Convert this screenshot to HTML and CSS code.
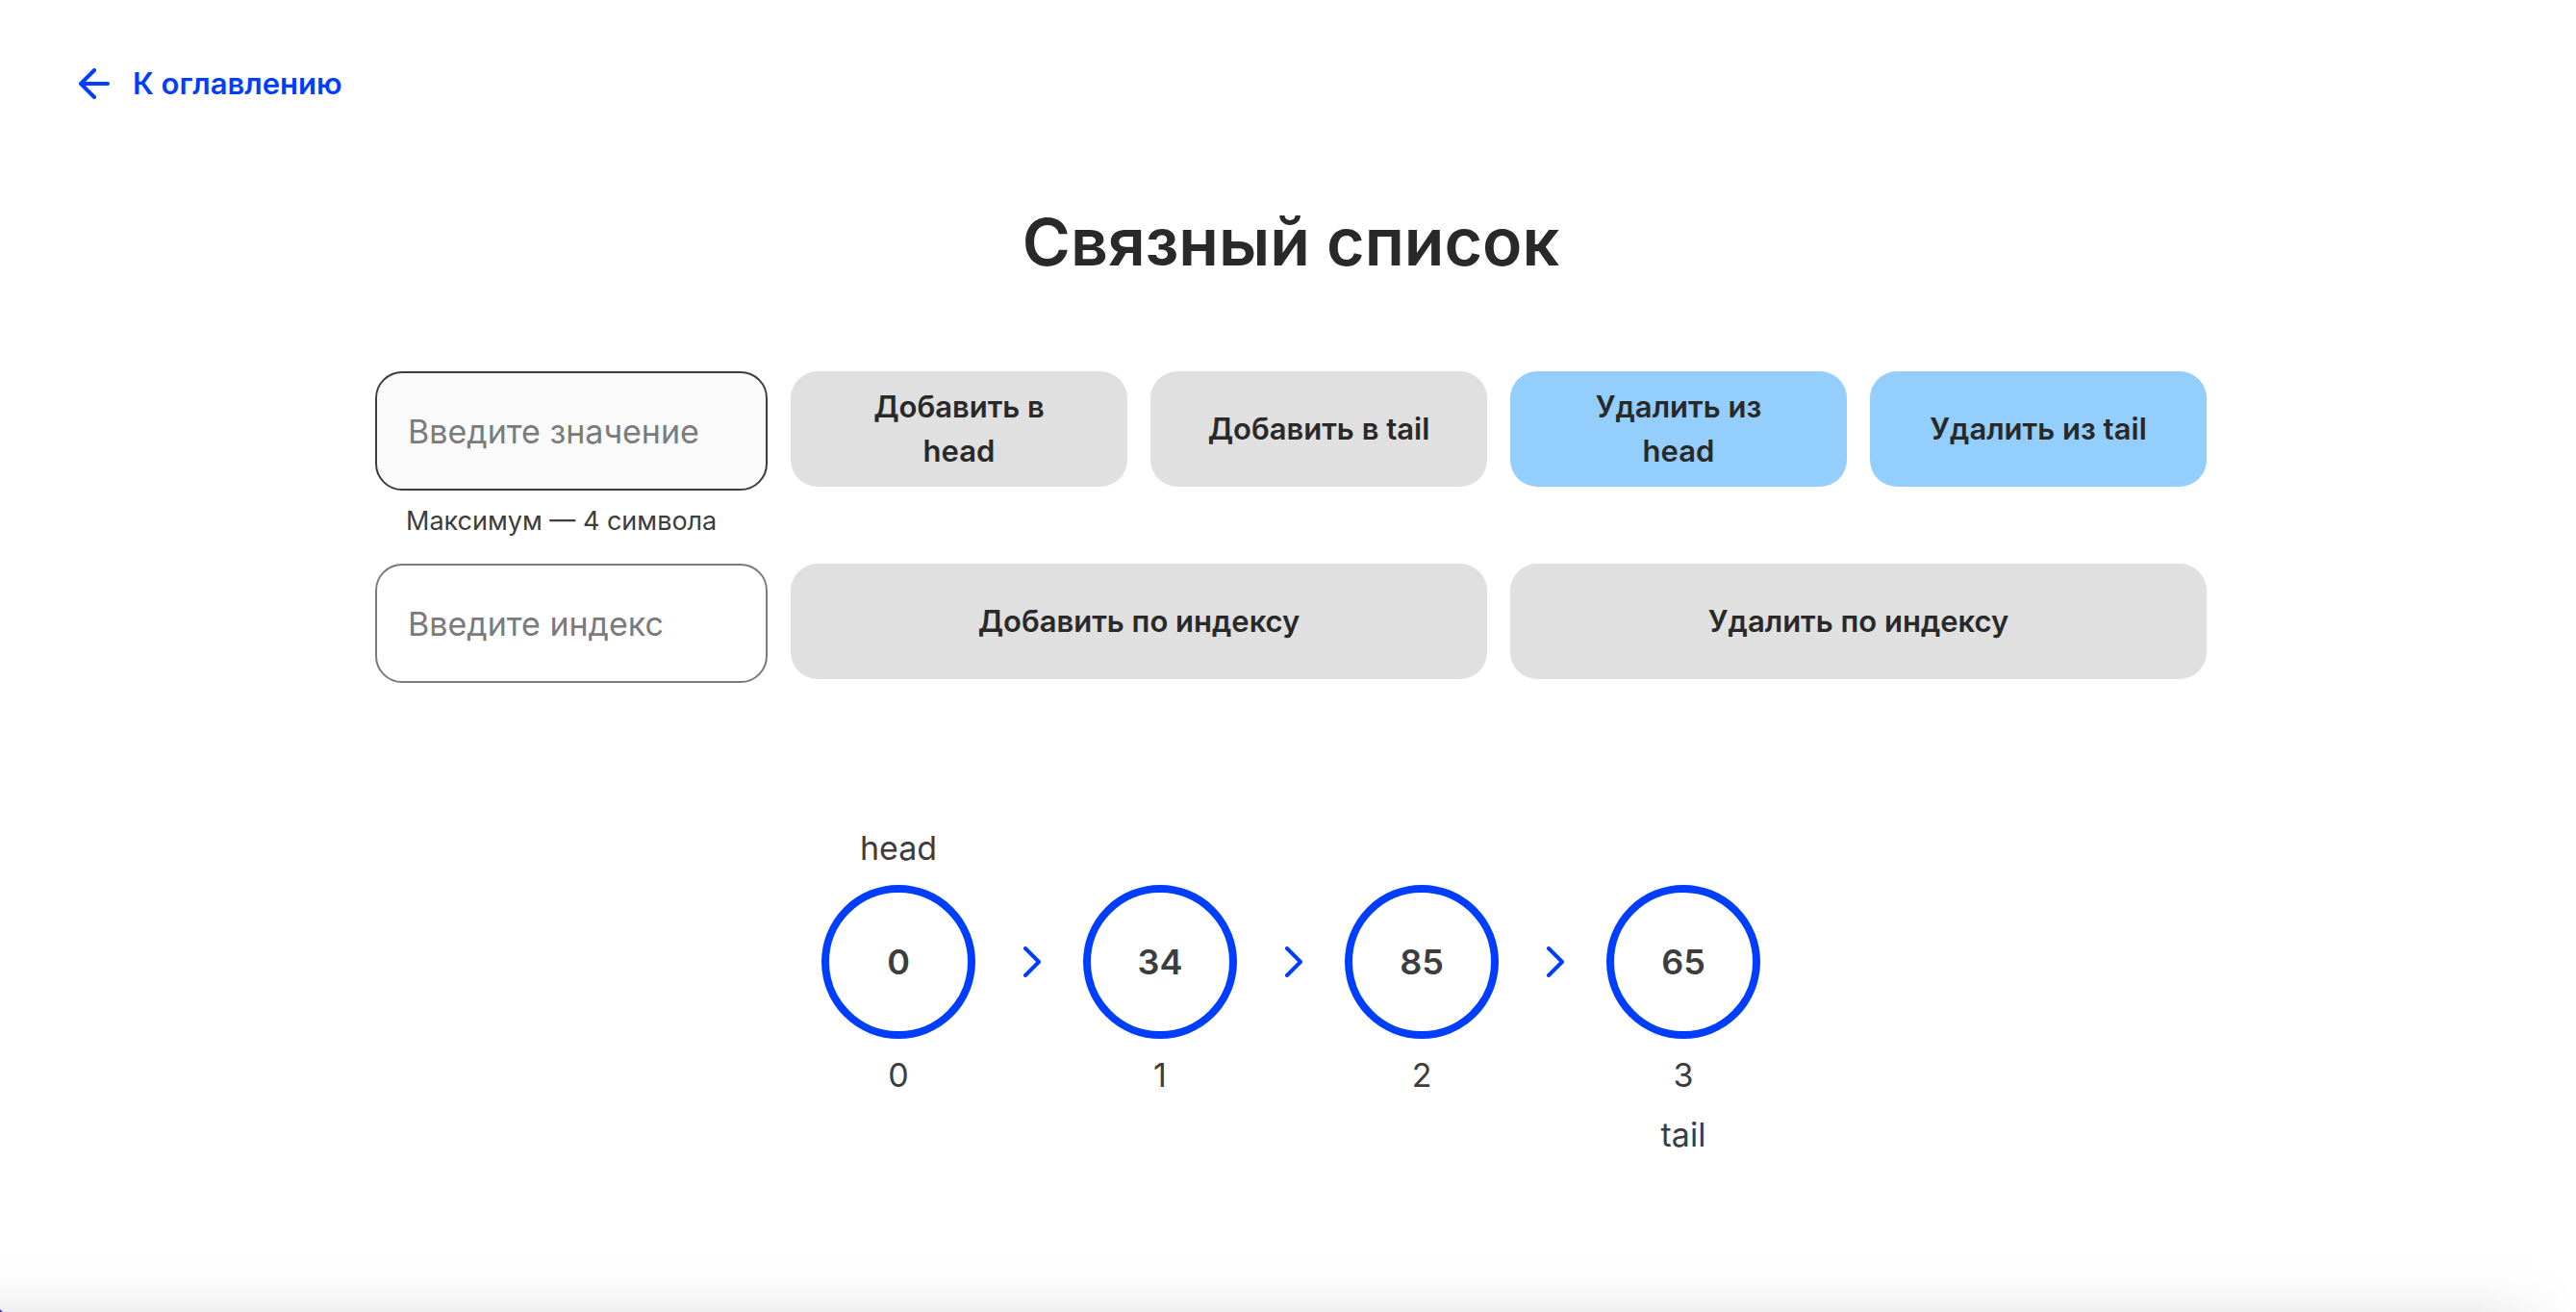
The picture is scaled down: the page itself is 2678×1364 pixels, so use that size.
FILE: index.html
```html
<!DOCTYPE html>
<html lang="ru">
<head>
<meta charset="utf-8">
<meta name="viewport" content="width=device-width, initial-scale=1">
<title>Связный список</title>
<link rel="stylesheet" href="styles.css">
</head>
<body>
<header class="header">
  <a class="back" href="#">
    <svg class="back-icon" viewBox="0 0 34 32" aria-hidden="true"><path d="M18 2 4 16l14 14M4 16h28"/></svg>
    <span>К оглавлению</span>
  </a>
</header>
<main class="main">
  <h1 class="title">Связный список</h1>
  <form class="controls">
    <div class="field field-active">
      <input class="input" type="text" maxlength="4" placeholder="Введите значение" aria-label="Введите значение" aria-describedby="hint">
      <span class="hint" id="hint">Максимум — 4 символа</span>
    </div>
    <button class="button" type="button" disabled>Добавить в head</button>
    <button class="button" type="button" disabled>Добавить в tail</button>
    <button class="button button-active" type="button">Удалить из head</button>
    <button class="button button-active" type="button">Удалить из tail</button>
    <div class="field">
      <input class="input" type="text" placeholder="Введите индекс" aria-label="Введите индекс">
    </div>
    <button class="button button-wide" type="button" disabled>Добавить по индексу</button>
    <button class="button button-wide" type="button" disabled>Удалить по индексу</button>
  </form>
  <ul class="list">
    <li class="node"><span class="label">head</span><span class="circle">0</span><span class="label">0</span><span class="label"></span></li>
    <li class="arrow"><svg class="arrow-icon" viewBox="0 0 20 32" aria-hidden="true"><path d="m3 2 14 14L3 30"/></svg></li>
    <li class="node"><span class="label"></span><span class="circle">34</span><span class="label">1</span><span class="label"></span></li>
    <li class="arrow"><svg class="arrow-icon" viewBox="0 0 20 32" aria-hidden="true"><path d="m3 2 14 14L3 30"/></svg></li>
    <li class="node"><span class="label"></span><span class="circle">85</span><span class="label">2</span><span class="label"></span></li>
    <li class="arrow"><svg class="arrow-icon" viewBox="0 0 20 32" aria-hidden="true"><path d="m3 2 14 14L3 30"/></svg></li>
    <li class="node"><span class="label"></span><span class="circle">65</span><span class="label">3</span><span class="label">tail</span></li>
  </ul>
</main>
<footer class="footer"><span class="corner"></span></footer>
</body>
</html>
```
FILE: styles.css
```css
* {
  box-sizing: border-box;
}

body {
  display: flex;
  flex-direction: column;
  min-height: 100vh;
  margin: 0;
  background: #fff;
  color: #3d3d3d;
  font-family: Inter, "Noto Sans", sans-serif;
}

.header {
  display: flex;
  padding: 63px 80px 0;
}

.back {
  display: flex;
  align-items: center;
  gap: 24px;
  color: #003eff;
  font-size: 31px;
  font-weight: 600;
  line-height: 48px;
  text-decoration: none;
}

.back-icon {
  width: 34px;
  height: 32px;
}

.back-icon path,
.arrow-icon path {
  fill: none;
  stroke: #003eff;
  stroke-width: 4;
  stroke-linecap: round;
  stroke-linejoin: round;
}

.main {
  display: flex;
  flex-direction: column;
  align-items: center;
  padding: 100px 0 0 6px;
}

.title {
  margin: 0;
  color: #292929;
  font-size: 68px;
  font-weight: 600;
  line-height: 80px;
}

.controls {
  display: grid;
  grid-template-columns: 408px repeat(4, 350px);
  grid-auto-rows: minmax(124px, auto);
  align-items: start;
  gap: 24px;
  margin-top: 95px;
}

.field {
  display: flex;
  flex-direction: column;
  gap: 12px;
}

.input {
  width: 100%;
  height: 124px;
  padding: 0 32px;
  border: 2px solid #7b7b7b;
  border-radius: 28px;
  background: #fff;
  color: #3d3d3d;
  font: 400 34px/48px Inter, "Noto Sans", sans-serif;
}

.input::placeholder {
  color: #7b7b7b;
  opacity: 1;
}

.field-active .input {
  border-color: #3d3d3d;
  background: #fafafa;
}

.hint {
  padding-left: 32px;
  font-size: 27px;
  line-height: 40px;
}

.button {
  height: 120px;
  padding: 0 52px;
  border: 0;
  border-radius: 28px;
  background: #e0e0e0;
  color: #292929;
  font: 600 31px/46px Inter, "Noto Sans", sans-serif;
}

.button-active {
  background: #93cefc;
}

.button-wide {
  grid-column: span 2;
}

.list {
  display: flex;
  margin: 148px 0 0;
  padding: 0;
  list-style: none;
}

.node {
  display: flex;
  flex-direction: column;
  align-items: center;
  gap: 14px;
  width: 160px;
}

.label {
  height: 48px;
  font-size: 34px;
  line-height: 48px;
}

.circle {
  display: flex;
  align-items: center;
  justify-content: center;
  width: 160px;
  height: 160px;
  border: 8px solid #003eff;
  border-radius: 50%;
  font-size: 36px;
  font-weight: 600;
}

.arrow {
  display: flex;
  justify-content: center;
  width: 112px;
  padding: 126px 0 0 6px;
}

.arrow-icon {
  width: 20px;
  height: 32px;
}

/* Soft shadow along the bottom edge */
.footer {
  display: flex;
  align-items: flex-end;
  height: 64px;
  margin-top: auto;
  background: linear-gradient(to bottom, #fff, #fcfcfc 50%, #f0f0f0);
  mask-image: linear-gradient(to left, transparent, #000 100px);
}

.corner {
  width: 3px;
  height: 3px;
  background: #4a3fd4;
  clip-path: polygon(0 0, 100% 100%, 0 100%);
}
```
